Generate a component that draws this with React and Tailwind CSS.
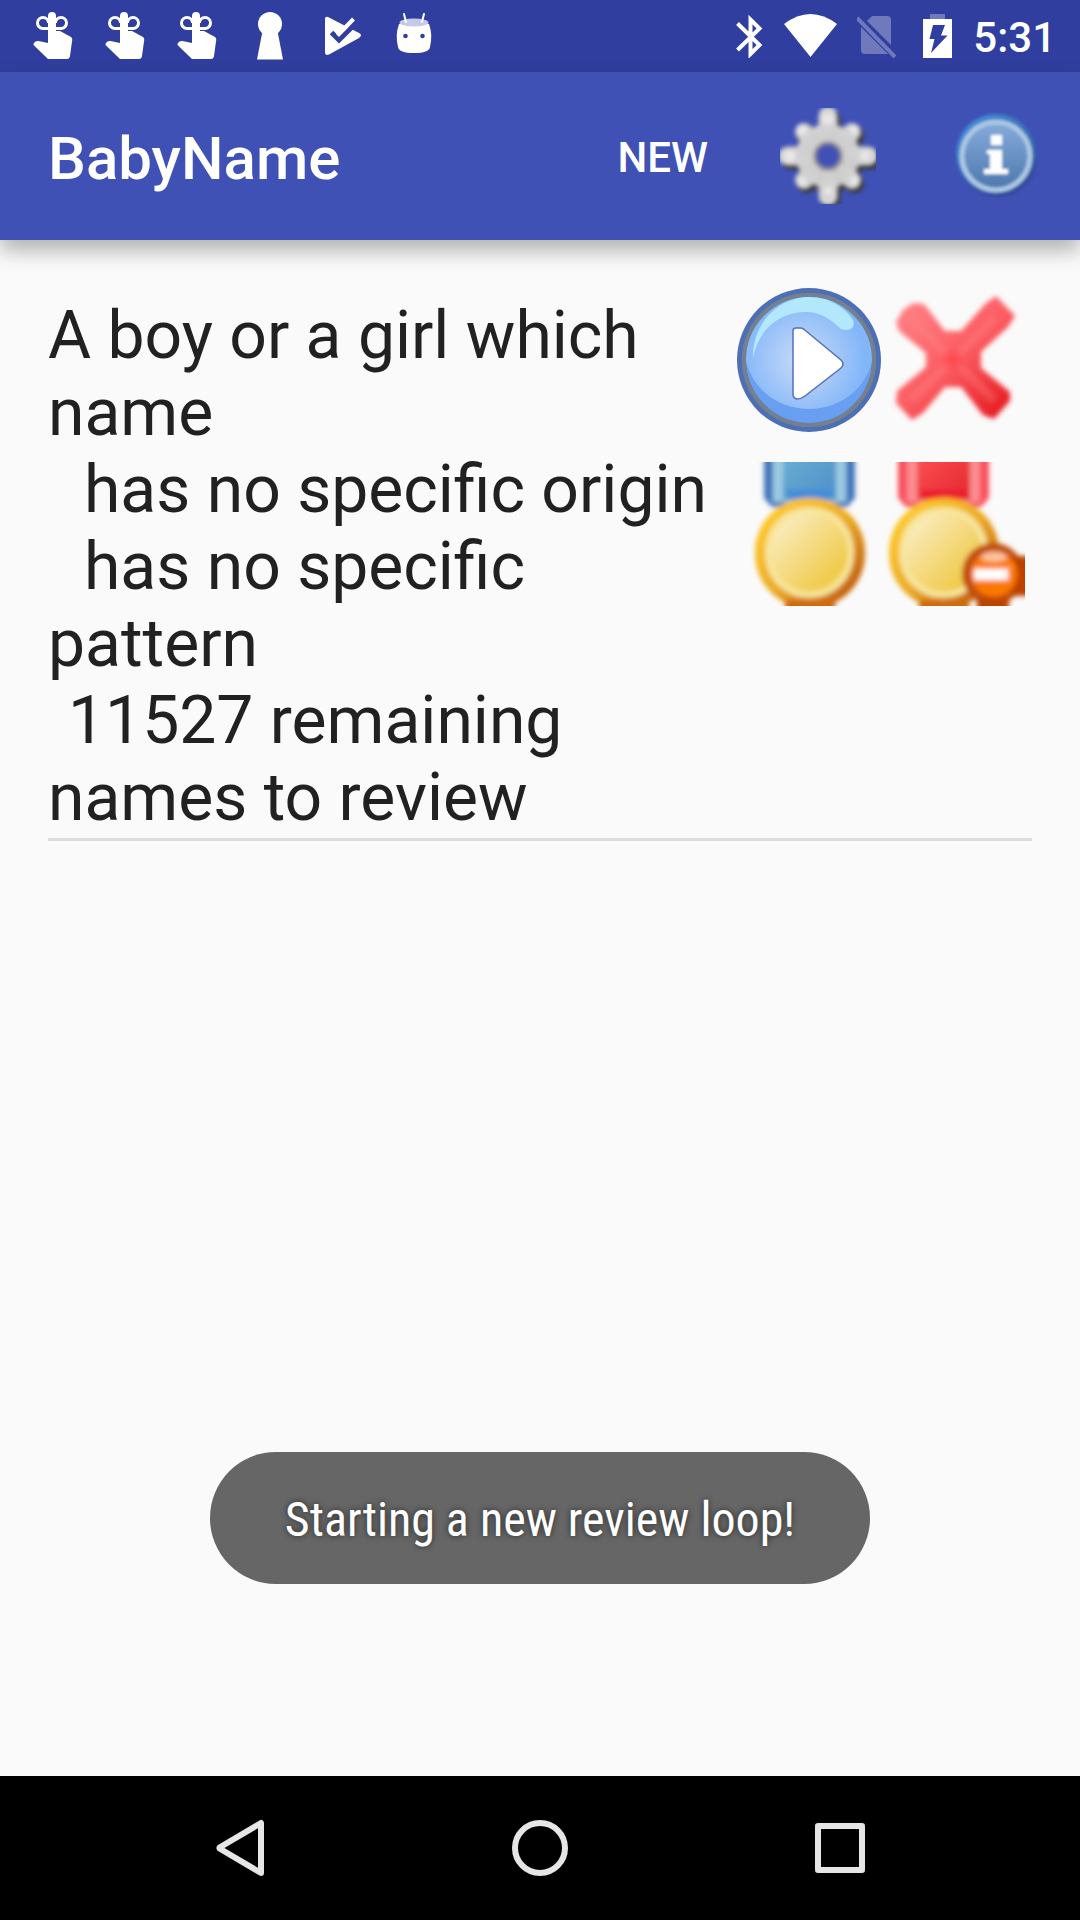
import React from "react";

function ReminderIcon() {
  return (
    <svg viewBox="0 0 72 72" className="size-18" fill="white" aria-hidden="true">
      <path d="M30 16a4 4 0 0 1 8 0V31h4l11 6q1.500 1 1.200 3l-2.200 16q-.5 3-3 3H30L15.500 45q-.5-2 2-3.500 1-.7 3-.4L30 43z" />
      <path d="M31 28.500h-6a5.500 5.500 0 1 1 5.500-5.500M37 28.500h6a5.500 5.500 0 1 0-5.500-5.500" fill="none" stroke="white" strokeWidth="3" />
    </svg>
  );
}

function KeyholeIcon() {
  return (
    <svg viewBox="0 0 72 72" className="size-18" fill="white" aria-hidden="true">
      <circle cx="36" cy="24" r="12" />
      <path d="M28.500 31 23 59.500h26L43.500 31z" />
    </svg>
  );
}

function PlayCheckIcon() {
  return (
    <svg viewBox="0 0 72 72" className="size-18" aria-hidden="true">
      <path d="M19 19q0-3 3-2L53 33q4 2 0 5L23 54.500q-4 1.500-4-2z" fill="white" />
      <path d="m25.500 32.500 7.500 7.500L51 22" fill="none" stroke="#303f9f" strokeWidth="5" />
      <path d="M31.500 35.500 47.500 19" fill="none" stroke="white" strokeWidth="4" />
    </svg>
  );
}

function RobotIcon() {
  return (
    <svg viewBox="0 0 72 72" className="size-18" aria-hidden="true">
      <path d="M21 24Q36 19 51 24 55 35 52 47 51 53 36 53T20 47Q17 35 21 24z" fill="white" />
      <ellipse cx="36" cy="22.500" rx="14.500" ry="4" fill="#c5cae9" />
      <path d="m26 14 2 8m18-8-2 8" stroke="white" strokeWidth="2" strokeLinecap="round" />
      <circle cx="27.500" cy="36" r="2.300" fill="#303f9f" />
      <circle cx="44.500" cy="36" r="2.300" fill="#303f9f" />
    </svg>
  );
}

function StatusBar() {
  return (
    <div className="flex h-18 items-center justify-between bg-[#303f9f] pr-6 pl-[18px]">
      <div className="flex">
        <ReminderIcon />
        <ReminderIcon />
        <ReminderIcon />
        <KeyholeIcon />
        <PlayCheckIcon />
        <RobotIcon />
      </div>
      <div className="flex items-center gap-5">
        <svg viewBox="0 0 29 44" className="h-11 w-[29px]" aria-hidden="true">
          <path d="m2.500 9.500 22 21.500-9 9V5.500l9 9L2.500 36" fill="none" stroke="white" strokeWidth="4" />
        </svg>
        <svg viewBox="0 0 53 44" className="h-11 w-[53px]" fill="white" aria-hidden="true">
          <path d="M0 10Q26.500-10 53 10L26.500 43z" />
        </svg>
        <svg viewBox="0 0 45 44" className="h-11 w-[45px]" fill="#7079bb" aria-hidden="true">
          <path d="M10 7 15 2H30q4 0 4 4V31zM4 13V36q0 4 4 4H31z" />
          <path d="m0 4 38 39" stroke="#7079bb" strokeWidth="4" />
        </svg>
        <svg viewBox="0 0 31 44" className="h-11 w-[31px]" aria-hidden="true">
          <path d="M8 0H23V5H8z" fill="#7079bb" />
          <path d="M1 5H30V44H1z" fill="white" />
          <path d="M11 11H23L19 21.500h6.500L9 39l3.500-14H7.500z" fill="#303f9f" />
        </svg>
        <span className="pt-1 text-[42px] leading-none font-medium text-white">5:31</span>
      </div>
    </div>
  );
}

const GEAR_TEETH = [0, 90, 180, 270];
const GEAR_DIAGONALS = [45, 135, 225, 315];

function GearShape({ paint }) {
  return (
    <g stroke={paint} fill="none">
      <circle cx="48" cy="48" r="22" strokeWidth="20" />
      {GEAR_TEETH.map((a) => (
        <path key={a} d="M48 24V8" strokeWidth="19" strokeLinecap="round" transform={`rotate(${a} 48 48)`} />
      ))}
      {GEAR_DIAGONALS.map((a) => (
        <path key={a} d="M48 24V14" strokeWidth="18" strokeLinecap="round" transform={`rotate(${a} 48 48)`} />
      ))}
    </g>
  );
}

function GearIcon() {
  return (
    <svg viewBox="0 0 96 96" className="size-24" aria-hidden="true">
      <defs>
        <linearGradient id="gear" gradientUnits="userSpaceOnUse" x1="15" y1="10" x2="80" y2="90">
          <stop offset="0" stopColor="#dadada" />
          <stop offset=".5" stopColor="#cacaca" />
          <stop offset="1" stopColor="#b4b4b4" />
        </linearGradient>
        <filter id="gearSoft" x="-10%" y="-10%" width="120%" height="120%">
          <feGaussianBlur stdDeviation="2" />
        </filter>
      </defs>
      <g filter="url(#gearSoft)" transform="translate(3 4)">
        <GearShape paint="#383838" />
      </g>
      <g filter="url(#gearSoft)">
        <GearShape paint="url(#gear)" />
        <circle cx="48" cy="48" r="13" fill="#3f51b5" stroke="#828288" strokeWidth="3" />
        <g fill="#f0f0f0" opacity=".7">
          <circle cx="48" cy="11" r="6" />
          <circle cx="10" cy="48" r="6" />
          <circle cx="85" cy="48" r="5" />
          <circle cx="48" cy="83" r="4" />
          <circle cx="22" cy="22" r="5" />
          <circle cx="74" cy="22" r="4" />
          <circle cx="22" cy="73" r="4" />
          <circle cx="74" cy="73" r="4" />
        </g>
      </g>
    </svg>
  );
}

function InfoIcon() {
  return (
    <svg viewBox="0 0 96 96" className="size-24" aria-hidden="true">
      <defs>
        <linearGradient id="infoRing" x1="0" y1="0" x2="1" y2="1">
          <stop offset="0" stopColor="#3f93dc" />
          <stop offset=".5" stopColor="#3a78bd" />
          <stop offset="1" stopColor="#2f5596" />
        </linearGradient>
        <linearGradient id="infoFill" x1="0" y1="0" x2="0" y2="1">
          <stop offset="0" stopColor="#86abdb" />
          <stop offset="1" stopColor="#4c78ae" />
        </linearGradient>
        <filter id="infoSoft" x="-15%" y="-15%" width="130%" height="130%">
          <feGaussianBlur stdDeviation="1.700" />
        </filter>
      </defs>
      <g filter="url(#infoSoft)">
        <circle cx="50" cy="50" r="39" fill="#2c3f8c" opacity=".6" />
        <circle cx="48" cy="46" r="40" fill="url(#infoRing)" />
        <circle cx="48" cy="48" r="34" fill="url(#infoFill)" stroke="#adc8e4" strokeWidth="5" />
        <path d="M43 27h11v10H43zM39 42h15v19h6v5H36v-5h6V46h-3z" fill="white" />
      </g>
    </svg>
  );
}

function PlayIcon() {
  return (
    <svg viewBox="0 0 144 144" className="size-36" aria-hidden="true">
      <defs>
        <radialGradient id="playGlow" gradientUnits="userSpaceOnUse" cx="66" cy="72" r="62">
          <stop offset="0" stopColor="#cbdcf7" />
          <stop offset="1" stopColor="#82b6f9" />
        </radialGradient>
        <clipPath id="playInside">
          <circle cx="72" cy="72" r="64" />
        </clipPath>
      </defs>
      <circle cx="72" cy="72" r="72" fill="#4d6fb5" />
      <circle cx="72" cy="72" r="67" fill="#74808f" />
      <circle cx="72" cy="72" r="63" fill="#689ff0" />
      <g clipPath="url(#playInside)">
        <ellipse cx="72" cy="62" rx="64" ry="59" fill="url(#playGlow)" />
      </g>
      <circle cx="72" cy="72" r="65" fill="none" stroke="#74808f" strokeWidth="4" />
      <path d="M16 70C15 35 42 9 72 9c22 0 37 12 44 23 3 8-4 12-12 9C94 32 85 24 68 24 39 25 22 43 16 70z" fill="#b3e7fc" />
      <path d="M56 43q0-3 3-3h5q2 0 5 3l35 29q4 4 0 8l-36 28q-4 3-8 3-4-1-4-5z" fill="white" stroke="#5670b8" strokeWidth="1.500" />
    </svg>
  );
}

function CrossIcon() {
  return (
    <svg viewBox="0 0 144 144" className="size-36" aria-hidden="true">
      <defs>
        <linearGradient id="crossFill" gradientUnits="userSpaceOnUse" x1="25" y1="20" x2="122" y2="125">
          <stop offset="0" stopColor="#ff7f82" />
          <stop offset=".5" stopColor="#fb5d62" />
          <stop offset="1" stopColor="#e71c22" />
        </linearGradient>
        <radialGradient id="crossDot">
          <stop offset="0" stopColor="#ff3f44" />
          <stop offset="1" stopColor="#ff3f44" stopOpacity="0" />
        </radialGradient>
        <filter id="crossSoft" x="-10%" y="-10%" width="120%" height="120%">
          <feGaussianBlur stdDeviation="2.500" />
        </filter>
      </defs>
      <g filter="url(#crossSoft)">
        <path d="M15 34 22 22 32 15 43 16 64 43H80L105 15 115 8 134 28 127 39 100 64V80L129 104 129 113 113 131 102 127 80 99H64L42 125 31 132 15 115 16 103 45 79V65L18 43z" fill="url(#crossFill)" />
        <path d="m32 33 40 39 42-42M72 72l41 40M72 72l-42 40" fill="none" stroke="#ff8a8d" strokeWidth="8" opacity=".3" />
        <circle cx="72" cy="72" r="13" fill="url(#crossDot)" />
      </g>
    </svg>
  );
}

const MEDALS = {
  blue: { edge: "#3f74bb", stripe: "#9ccae2", from: "#6bb0d2", to: "#4c8ec8", glow: "#3f8ddc", shift: "translate(0 0)" },
  red: { edge: "#f8505c", stripe: "#fb8d90", from: "#fd5256", to: "#e3262c", glow: "#ec1c30", shift: "translate(-10 0)" },
};

function MedalIcon({ color, removing }) {
  const m = MEDALS[color];
  return (
    <svg viewBox="0 0 144 144" className="size-36" aria-hidden="true">
      <defs>
        <linearGradient id={`${color}Ribbon`} x1="0" y1="0" x2="1" y2="1">
          <stop offset="0" stopColor={m.from} />
          <stop offset="1" stopColor={m.to} />
        </linearGradient>
        <linearGradient id={`${color}Rim`} x1="0" y1="0" x2="1" y2="1">
          <stop offset=".1" stopColor="#ffca28" />
          <stop offset=".5" stopColor="#ecac22" />
          <stop offset=".85" stopColor="#c4640c" />
        </linearGradient>
        <linearGradient id={`${color}Gold`} x1="0" y1="0" x2="1" y2="1">
          <stop offset=".1" stopColor="#faecc0" />
          <stop offset=".8" stopColor="#f0cb4c" />
          <stop offset="1" stopColor="#f4de70" />
        </linearGradient>
        <filter id={`${color}Soft`} x="-10%" y="-10%" width="120%" height="120%">
          <feGaussianBlur stdDeviation="2.500" />
        </filter>
      </defs>
      <g filter={`url(#${color}Soft)`}>
        <g transform={m.shift}>
          <path d="M27-10H118V36l-8 9H35L27 36z" fill={m.edge} />
          <path d="M36-10H109V40H36z" fill={m.stripe} />
          <path d="M46-10H99V38H46z" fill={`url(#${color}Ribbon)`} />
          <path d="M48 28H97L92 38H53z" fill={m.glow} />
          <rect x="18" y="36" width="110" height="110" rx="54" fill={`url(#${color}Rim)`} />
          <rect x="28" y="45" width="89" height="91" rx="44" fill="#f8e69c" />
          <rect x="34" y="51" width="77" height="79" rx="38" fill={`url(#${color}Gold)`} />
          <path d="M48 138H98V154H48z" fill="#cf6a08" />
        </g>
        {removing && (
          <g>
            <circle cx="112" cy="112" r="31" fill="#c24d0c" />
            <path d="M130 94h24v40h-24zM96 136h32v16H96z" fill="#bc4202" />
            <circle cx="113" cy="112" r="23" fill="#fb7806" />
            <ellipse cx="113" cy="95" rx="13" ry="5" fill="#fbc39c" />
            <path d="M93 102q20 8 40 0v5H93z" fill="#ff8a28" />
            <path d="M93 107h34v11H93z" fill="white" />
          </g>
        )}
      </g>
    </svg>
  );
}

function AppBar() {
  return (
    <header className="relative z-10 flex h-42 items-center bg-[#3f51b5] pl-12 text-white shadow-[0_10px_20px_rgba(0,0,0,0.3)]">
      <h1 className="flex-1 pt-1.5 text-[60px] leading-none font-medium">BabyName</h1>
      <button type="button" className="h-full px-9 pt-1 text-[42px] leading-none font-medium">
        NEW
      </button>
      <button type="button" aria-label="Settings" className="flex h-full w-42 items-center justify-center">
        <GearIcon />
      </button>
      <button type="button" aria-label="Information" className="flex h-full w-42 items-center justify-center">
        <InfoIcon />
      </button>
    </header>
  );
}

function Review() {
  return (
    <section className="mx-12 flex items-start border-b-3 border-[#dcdcdc] pt-12 pr-[7px]">
      <div className="flex-1 pt-[9px] pb-0.5 text-[66px] leading-[77px] text-[#212121]">
        <p>A boy or a girl which name</p>
        <p className="indent-9">has no specific origin</p>
        <p className="indent-9">has no specific pattern</p>
        <p className="indent-5">11527 remaining names to review</p>
      </div>
      <div className="grid shrink-0 grid-cols-2 gap-y-[30px]">
        <button type="button" aria-label="Start review">
          <PlayIcon />
        </button>
        <button type="button" aria-label="Delete">
          <CrossIcon />
        </button>
        <button type="button" aria-label="Best names">
          <MedalIcon color="blue" />
        </button>
        <button type="button" aria-label="Remove ranking">
          <MedalIcon color="red" removing />
        </button>
      </div>
    </section>
  );
}

function NavBar() {
  const button = "flex h-full w-75 items-center justify-center";
  const icon = "size-18";
  return (
    <nav className="flex h-36 justify-center bg-black">
      <button type="button" aria-label="Back" className={button}>
        <svg viewBox="0 0 72 72" className={icon} fill="none" stroke="#e6e6e6" strokeWidth="6" strokeLinejoin="round" aria-hidden="true">
          <path d="M57 11V61L15.500 36.500v-1z" />
        </svg>
      </button>
      <button type="button" aria-label="Home" className={button}>
        <svg viewBox="0 0 72 72" className={icon} fill="none" stroke="#e6e6e6" strokeWidth="6" aria-hidden="true">
          <circle cx="36" cy="36" r="25" />
        </svg>
      </button>
      <button type="button" aria-label="Recent apps" className={button}>
        <svg viewBox="0 0 72 72" className={icon} fill="none" stroke="#e6e6e6" strokeWidth="6" strokeLinejoin="round" aria-hidden="true">
          <path d="M14 14H58V58H14z" />
        </svg>
      </button>
    </nav>
  );
}

export default function App() {
  return (
    <div className="flex min-h-screen flex-col bg-[#fafafa] font-['Roboto',sans-serif]">
      <StatusBar />
      <AppBar />
      <main className="relative flex-1">
        <Review />
        <div className="absolute inset-x-0 bottom-48 flex justify-center">
          <div
            role="status"
            className="flex h-33 items-center rounded-full bg-[#666666] px-[75px] pt-1 font-['Roboto_Condensed','Roboto',sans-serif] text-[48px] leading-none whitespace-nowrap text-white [text-shadow:0_0_6px_rgba(0,0,0,0.6)]"
          >
            Starting a new review loop!
          </div>
        </div>
      </main>
      <NavBar />
    </div>
  );
}
